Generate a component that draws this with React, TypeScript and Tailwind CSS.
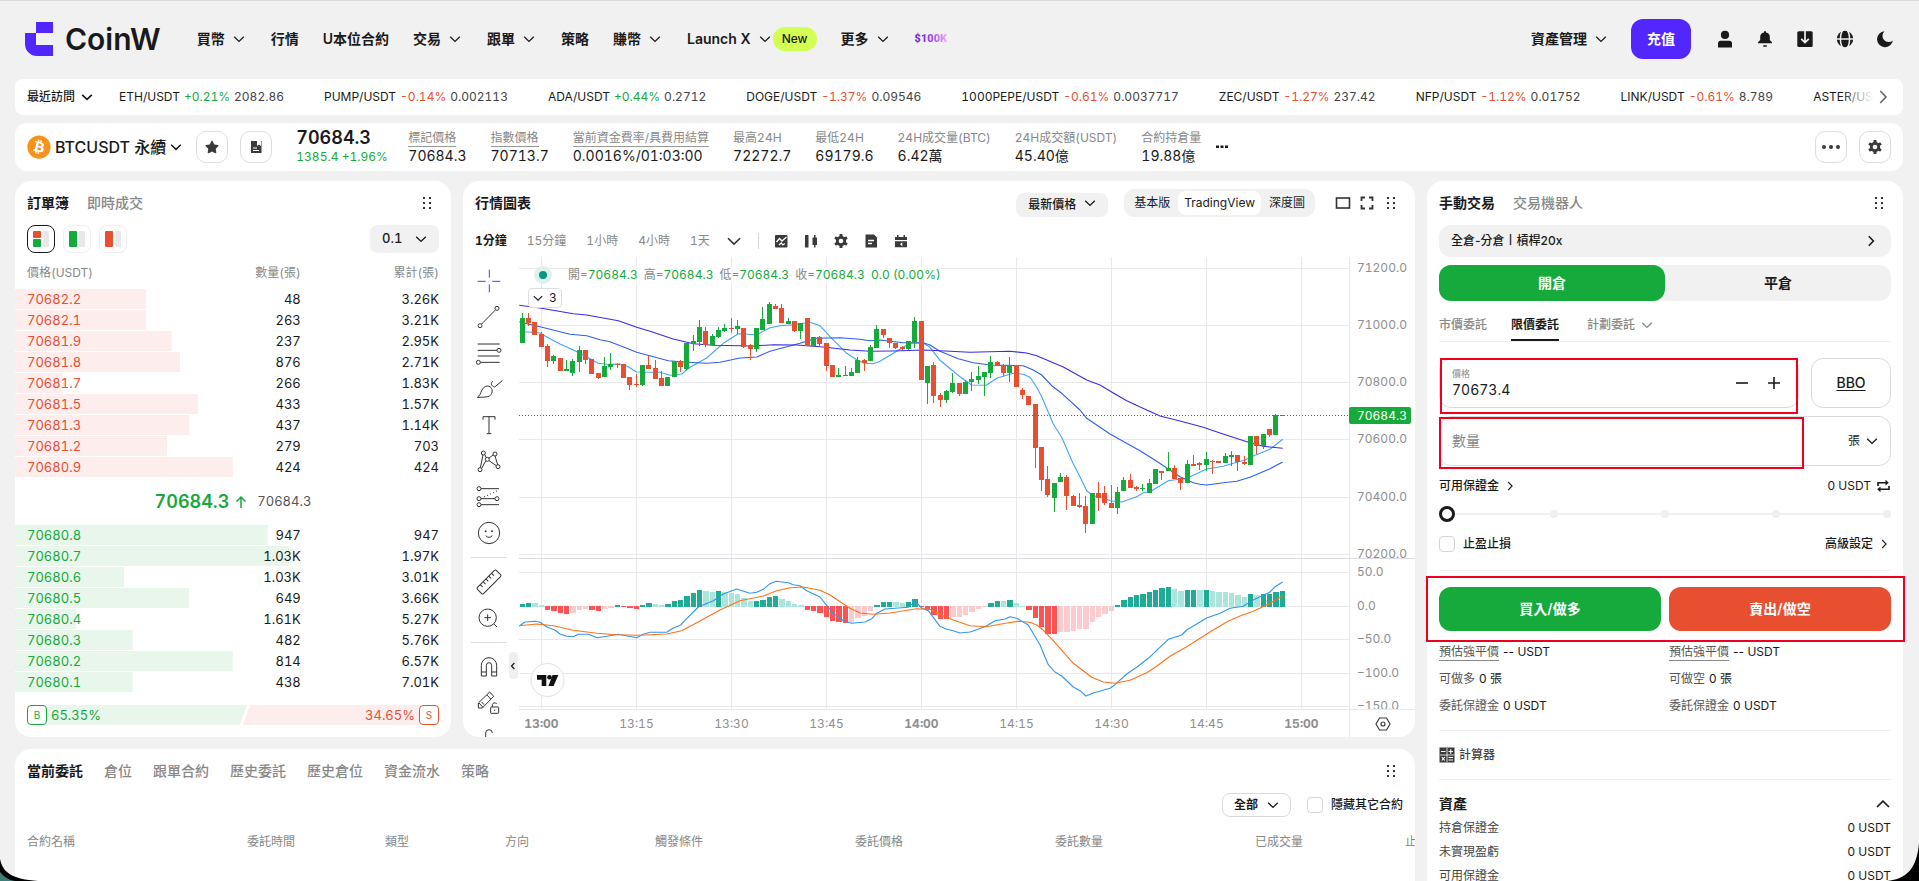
import type { ReactNode } from "react";
import { FaBitcoin, FaStar } from "react-icons/fa";

/* ---------- shared bits ---------- */

const Chevron = ({ className = "size-4", dir = "down", w = 1.3 }: { className?: string; dir?: "down" | "up" | "right" | "left"; w?: number }) => {
  const d = { down: "M3.2 5.8 8 10.4l4.8-4.6", up: "M3.2 10.4 8 5.8l4.8 4.6", right: "M5.8 3.2 10.4 8l-4.6 4.8", left: "M10.2 3.2 5.6 8l4.6 4.8" }[dir];
  return (
    <svg viewBox="0 0 16 16" className={`shrink-0 ${className}`} fill="none" stroke="currentColor" strokeWidth={w} aria-hidden="true">
      <path d={d} />
    </svg>
  );
};

const Grip = () => (
  <svg viewBox="0 0 12 16" className="h-4 w-3 shrink-0 fill-[#333]" aria-hidden="true">
    {[2, 8].map((x) => [2, 7, 12].map((y) => <rect key={`${x}-${y}`} x={x} y={y} width="2" height="2" />))}
  </svg>
);

const Gear = ({ className = "size-4" }: { className?: string }) => (
  <svg viewBox="-8 -8 16 16" className={className} aria-hidden="true">
    {[0, 60, 120].map((a) => (
      <rect key={a} x="-1.5" y="-7" width="3" height="14" rx="0.6" transform={`rotate(${a})`} fill="#3a3a3a" />
    ))}
    <path d="M0-5.8 5-2.9V2.9L0 5.8-5 2.9V-2.9Z" fill="#3a3a3a" />
    <circle r="2.3" fill="#fff" />
  </svg>
);

const Select = ({ label, value, className, box }: { label: string; value: string; className: string; box: string }) => (
  <div className={`relative shrink-0 ${box}`}>
    <select aria-label={label} defaultValue={value} className={`size-full appearance-none outline-none ${className}`}>
      <option>{value}</option>
    </select>
    <Chevron className="pointer-events-none absolute top-1/2 right-2.5 size-4 -translate-y-1/2" w={1.4} />
  </div>
);

const CheckBox = ({ label }: { label: string }) => (
  <label className="flex items-center gap-2 font-medium">
    <input type="checkbox" className="size-4 appearance-none rounded-sm border border-[#d5d5d5] bg-white" />
    {label}
  </label>
);

/* ---------- header ---------- */

const NavItem = ({ label, menu, badge }: { label: string; menu?: boolean; badge?: string }) => (
  <a href="#" className="flex items-center whitespace-nowrap">
    {label}
    {menu && <Chevron className="ml-1.5 size-4" />}
    {badge && <span className="rounded-full bg-[#d2ff52] px-[9px] text-xs leading-6 font-medium">{badge}</span>}
  </a>
);

const Header = () => (
  <header className="flex h-[79px] items-center border-t border-[#dcdcdc] pr-6 pb-0.5 pl-[25px] text-sm font-semibold">
    <a href="#" className="flex items-center gap-3">
      <svg viewBox="0 0 28 34" className="h-[34px] w-7" fill="#5227ff" aria-hidden="true">
        <path d="M11 0H28V11H11Z" />
        <path d="M0 11H11V23H28V34H12A12 12 0 0 1 0 22Z" />
      </svg>
      <span className="text-[30px] leading-8 font-semibold">CoinW</span>
    </a>
    <nav className="ml-9 flex items-center gap-6">
      <NavItem label="買幣" menu />
      <NavItem label="行情" />
      <NavItem label="U本位合約" />
      <NavItem label="交易" menu />
      <NavItem label="跟單" menu />
      <NavItem label="策略" />
      <NavItem label="賺幣" menu />
      <NavItem label="Launch X" menu badge="New" />
      <NavItem label="更多" menu />
      <a href="#" className="bg-gradient-to-r from-[#6a1fd0] via-[#a03ce0] to-[#f0a8ff] bg-clip-text font-['Roboto',sans-serif] text-[11px] font-black text-transparent">
        $100K
      </a>
    </nav>
    <div className="ml-auto flex items-center">
      <NavItem label="資產管理" menu />
      <button className="ml-[22px] h-10 rounded-xl bg-[#5227ff] px-4 text-white">充值</button>
      <div className="ml-6 flex items-center gap-5">
        <button aria-label="user">
          <svg viewBox="0 0 20 20" className="size-5" fill="#1a1a1a"><circle cx="10" cy="5.900" r="4.100" /><path d="M3 18.500V14.500A2.800 2.800 0 0 1 5.800 11.700h8.400A2.800 2.800 0 0 1 17 14.500v4Z" /></svg>
        </button>
        <button aria-label="notifications">
          <svg viewBox="0 0 20 20" className="size-5" fill="#1a1a1a"><path d="M9 2.200h2v1.300a4.600 4.600 0 0 1 3.800 4.600v2.900l2.200 2.300v1H3v-1l2.200-2.300V8.100A4.600 4.600 0 0 1 9 3.500ZM8.200 16.300h3.600v1.400H8.200Z" /></svg>
        </button>
        <button aria-label="download">
          <svg viewBox="0 0 20 20" className="size-5"><rect x="2.300" y="2.300" width="15.400" height="15.800" rx="1.500" fill="#1a1a1a" /><path d="M10 2v11.500M6.200 9.800 10 13.600l3.800-3.800" fill="none" stroke="#f1f1f1" strokeWidth="1.700" /></svg>
        </button>
        <button aria-label="language">
          <svg viewBox="0 0 20 20" className="size-5" fill="#1a1a1a">
            <circle cx="10" cy="10" r="8.200" />
            <g fill="none" stroke="#f1f1f1" strokeWidth="1.500"><ellipse cx="10" cy="10" rx="4.600" ry="10" /><path d="M1 10h18" /></g>
          </svg>
        </button>
        <button aria-label="dark mode">
          <svg viewBox="0 0 20 20" className="size-5" fill="#1a1a1a"><path d="M9.500 2.200a8 8 0 1 0 8.400 9.300 6 6 0 0 1-8.400-9.300Z" /></svg>
        </button>
      </div>
    </div>
  </header>
);

/* ---------- recent tickers ---------- */

const tickers = [
  ["ETH/USDT", "+0.21%", "2082.86"],
  ["PUMP/USDT", "-0.14%", "0.002113"],
  ["ADA/USDT", "+0.44%", "0.2712"],
  ["DOGE/USDT", "-1.37%", "0.09546"],
  ["1000PEPE/USDT", "-0.61%", "0.0037717"],
  ["ZEC/USDT", "-1.27%", "237.42"],
  ["NFP/USDT", "-1.12%", "0.01752"],
  ["LINK/USDT", "-0.61%", "8.789"],
  ["ASTER/USDT", "", ""],
];

const Tickers = () => (
  <section className="flex h-9 items-center rounded-lg bg-white px-3 text-xs">
    <button className="flex shrink-0 items-center gap-1 font-medium">
      最近訪問
      <Chevron className="size-4" w={1.6} />
    </button>
    <div className="relative ml-6 flex flex-1 gap-10 overflow-hidden">
      {tickers.map(([pair, change, price]) => (
        <a href="#" key={pair} className="flex shrink-0 gap-1 whitespace-nowrap">
          <span>{pair}</span>
          {change && <span className={change[0] === "+" ? "text-[#16a93b]" : "text-[#e84f31]"}>{change}</span>}
          {price && <span className="text-[#444]">{price}</span>}
        </a>
      ))}
      <div className="absolute inset-y-0 right-0 w-8 bg-gradient-to-r from-white/0 to-white" />
    </div>
    <button aria-label="next" className="-mr-0.5 text-[#666]"><Chevron dir="right" className="size-5" /></button>
  </section>
);

/* ---------- contract info ---------- */

const stats: [string, string, boolean][] = [
  ["標記價格", "70684.3", true],
  ["指數價格", "70713.7", true],
  ["當前資金費率/具費用結算", "0.0016%/01:03:00", true],
  ["最高24H", "72272.7", false],
  ["最低24H", "69179.6", false],
  ["24H成交量(BTC)", "6.42萬", false],
  ["24H成交額(USDT)", "45.40億", false],
  ["合約持倉量", "19.88億", false],
];

const SquareButton = ({ label, children }: { label: string; children: ReactNode }) => (
  <button aria-label={label} className="flex size-8 items-center justify-center rounded-[10px] border border-[#dedede] text-[#3a3a3a]">
    {children}
  </button>
);

const InfoBar = () => (
  <section className="flex h-12 items-center rounded-xl bg-white px-3">
    <FaBitcoin className="size-6 text-[#f7931a]" />
    <button className="ml-1 flex items-center gap-0.5 text-base font-medium whitespace-nowrap">
      BTCUSDT 永續
      <Chevron className="size-4" w={1.5} />
    </button>
    <div className="ml-3 flex gap-3">
      <SquareButton label="favorite"><FaStar className="size-3.5" /></SquareButton>
      <SquareButton label="contract details">
        <svg viewBox="0 0 16 16" className="size-4"><path d="M3 2h6v5l2-1.500L13 7V2h.500V14H3Z" fill="#3a3a3a" /><path d="M5 9h4M5 11.500h6" stroke="#fff" strokeWidth="1.200" /></svg>
      </SquareButton>
    </div>
    <div className="ml-6 w-[92px] whitespace-nowrap">
      <div className="text-lg leading-5 font-semibold">70684.3</div>
      <div className="text-xs leading-[18px] text-[#16a93b]">1385.4 +1.96%</div>
    </div>
    <dl className="ml-5 flex gap-6 whitespace-nowrap">
      {stats.map(([k, v, under]) => (
        <div key={k}>
          <dt className={`w-fit border-b text-xs leading-4 text-[#888] ${under ? "border-[#999]" : "border-transparent"}`}>{k}</dt>
          <dd className="text-sm leading-[18px]">{v}</dd>
        </div>
      ))}
    </dl>
    <button aria-label="more statistics" className="ml-3.5">
      <svg viewBox="0 0 14 4" className="h-1 w-3.5" fill="#1a1a1a"><rect x="1" y="0.500" width="3" height="2.500" /><rect x="5.500" y="0.500" width="3" height="2.500" /><rect x="10" y="0.500" width="3" height="2.500" /></svg>
    </button>
    <div className="ml-auto flex gap-3">
      <SquareButton label="more">
        <svg viewBox="0 0 20 4" className="h-1 w-5" fill="#3a3a3a"><circle cx="3" cy="2" r="2" /><circle cx="10" cy="2" r="2" /><circle cx="17" cy="2" r="2" /></svg>
      </SquareButton>
      <SquareButton label="settings"><Gear /></SquareButton>
    </div>
  </section>
);

/* ---------- order book ---------- */

const asks: [string, string, string, number][] = [
  ["70682.2", "48", "3.26K", 30],
  ["70682.1", "263", "3.21K", 30],
  ["70681.9", "237", "2.95K", 36],
  ["70681.8", "876", "2.71K", 38],
  ["70681.7", "266", "1.83K", 11],
  ["70681.5", "433", "1.57K", 42],
  ["70681.3", "437", "1.14K", 40],
  ["70681.2", "279", "703", 35],
  ["70680.9", "424", "424", 50],
];
const bids: [string, string, string, number][] = [
  ["70680.8", "947", "947", 58],
  ["70680.7", "1.03K", "1.97K", 63],
  ["70680.6", "1.03K", "3.01K", 25],
  ["70680.5", "649", "3.66K", 40],
  ["70680.4", "1.61K", "5.27K", 14],
  ["70680.3", "482", "5.76K", 27],
  ["70680.2", "814", "6.57K", 50],
  ["70680.1", "438", "7.01K", 27],
];

const BookRows = ({ rows, color, bar }: { rows: typeof asks; color: string; bar: string }) => (
  <tbody>
    {rows.map(([p, q, t, w]) => (
      <tr
        key={p}
        className="h-[21px]"
        style={{ backgroundImage: `linear-gradient(${bar},${bar})`, backgroundSize: `${w}% 20px`, backgroundRepeat: "no-repeat" }}
      >
        <td className={`pl-3 ${color}`}>{p}</td>
        <td className="pr-0.5 text-right">{q}</td>
        <td className="pr-3 text-right">{t}</td>
      </tr>
    ))}
  </tbody>
);

const BookCols = () => (
  <colgroup>
    <col className="w-[34%]" />
    <col className="w-[32%]" />
    <col className="w-[34%]" />
  </colgroup>
);

const OrderBook = () => (
  <section className="w-[436px] shrink-0 overflow-hidden rounded-2xl bg-white">
    <div className="flex h-11 items-center gap-[18px] pr-3.5 pl-3 text-sm">
      <button className="font-bold">訂單簿</button>
      <button className="font-medium text-[#888]">即時成交</button>
      <button aria-label="move" className="ml-auto px-1"><Grip /></button>
    </div>
    <div className="flex items-center gap-2 px-3">
      <button aria-label="both sides" className="flex size-7 items-center justify-center rounded-lg border border-[#1a1a1a]">
        <svg viewBox="0 0 16 16" className="size-4"><rect width="8" height="7" rx="1" fill="#e84f31" /><rect y="8" width="8" height="8" rx="1" fill="#16a93b" /><rect x="10" width="6" height="16" rx="1" fill="#e8e8e8" /></svg>
      </button>
      <button aria-label="bids" className="flex size-7 items-center justify-center rounded-lg border border-[#efefef]">
        <svg viewBox="0 0 16 16" className="size-4"><rect width="8" height="16" rx="1" fill="#16a93b" /><rect x="10" width="6" height="16" rx="1" fill="#e8e8e8" /></svg>
      </button>
      <button aria-label="asks" className="flex size-7 items-center justify-center rounded-lg border border-[#efefef]">
        <svg viewBox="0 0 16 16" className="size-4"><rect width="8" height="16" rx="1" fill="#e84f31" /><rect x="10" width="6" height="16" rx="1" fill="#e8e8e8" /></svg>
      </button>
      <Select label="depth" value="0.1" box="ml-auto h-7 w-[69px]" className="rounded-lg bg-[#f1f1f1] pl-3 text-[13px] font-medium" />
    </div>
    <table className="mt-1 w-full table-fixed border-collapse text-[13px]">
      <BookCols />
      <thead>
        <tr className="h-8 text-xs text-[#888]">
          <th className="pl-3 text-left font-normal">價格(USDT)</th>
          <th className="pr-0.5 text-right font-normal">數量(張)</th>
          <th className="pr-3 text-right font-normal">累計(張)</th>
        </tr>
      </thead>
      <BookRows rows={asks} color="text-[#e84f31]" bar="#fdeeed" />
    </table>
    <div className="flex h-[47px] items-center justify-center text-[13px] text-[#555]">
      <span className="text-lg font-semibold text-[#16a93b]">70684.3</span>
      <svg viewBox="0 0 16 16" className="mx-1 size-4" fill="none" stroke="#16a93b" strokeWidth="1.500"><path d="M8 14V3M3.500 7.500 8 3l4.500 4.500" /></svg>
      <span className="ml-1">70684.3</span>
    </div>
    <table className="w-full table-fixed border-collapse text-[13px]">
      <BookCols />
      <BookRows rows={bids} color="text-[#16a93b]" bar="#e8f6eb" />
    </table>
    <div className="m-3 flex h-5 items-center text-[13px]">
      <span className="flex size-5 items-center justify-center rounded border border-[#16a93b] text-[10px] text-[#16a93b]">B</span>
      <span className="h-5 flex-[198] bg-[#e8f6eb] pl-1 leading-5 text-[#16a93b] [clip-path:polygon(0_0,100%_0,calc(100%-7px)_100%,0_100%)]">65.35%</span>
      <span className="-ml-1 h-5 flex-[174] bg-[#fdeeed] pr-1 text-right leading-5 text-[#e84f31] [clip-path:polygon(7px_0,100%_0,100%_100%,0_100%)]">34.65%</span>
      <span className="flex size-5 items-center justify-center rounded border border-[#e84f31] text-[10px] text-[#e84f31]">S</span>
    </div>
  </section>
);

/* ---------- chart data: side, high, body top, body bottom, low (third-pixels) ---------- */

const candles = `g399 414 489 489;r399 414 429 438;r426 426 465 465;r456 462 501 501;r492 498 543 561;g525 528 543 552;r534 534 573 573;g540 567 573 573;g537 543 579 588;g498 510 546 576;r510 510 540 552;r537 537 582 582;r579 579 594 597;g531 558 591 591;g519 552 561 570;r549 552 555 564;r552 552 594 594;r591 591 615 630;r582 612 615 621;g555 555 615 618;r528 555 567 567;r540 564 597 597;r573 594 618 618;g591 591 618 618;g543 543 591 591;r540 543 561 576;g489 489 567 570;g465 483 492 513;g420 441 486 498;r441 453 495 501;g462 468 495 495;g441 450 471 474;g432 444 453 456;r414 444 447 459;g420 438 447 462;r444 444 501 504;r492 495 507 540;g444 444 507 516;g381 417 450 450;g366 372 432 432;r372 378 387 387;r372 384 429 429;g414 423 432 432;r423 423 453 456;g429 429 453 477;r414 414 498 498;g471 471 498 498;r468 471 492 501;r489 489 558 573;r555 555 591 591;g564 585 591 591;g558 585 588 588;g564 576 588 588;g531 540 579 579;r537 540 549 573;g495 501 543 543;g435 447 504 504;r447 447 465 474;r474 474 489 504;r489 489 504 507;r498 501 507 510;g483 483 507 510;g411 423 486 504;r423 423 600 600;g558 558 609 672;r546 555 648 669;r639 645 660 681;g630 633 660 669;g579 609 636 639;r609 609 642 648;g600 606 642 642;g576 597 606 633;g558 588 600 612;g576 576 591 648;g528 546 579 594;r543 546 558 558;r552 555 579 588;g531 555 579 606;r555 555 621 621;r624 630 645 657;r648 648 675 675;r672 672 804 864;r801 801 900 933;r858 897 945 951;g909 909 954 996;g879 891 906 906;r885 891 948 990;r945 948 978 978;r939 975 981 984;r948 978 1032 1059;g939 939 1032 1032;r906 939 954 993;r918 939 969 975;r915 969 984 984;g921 936 984 1002;g891 900 933 933;r882 900 924 924;r918 921 927 933;g912 924 927 933;g897 909 939 939;g867 867 912 912;r873 873 879 900;g816 864 873 873;r855 864 897 897;r894 894 909 930;g840 852 909 909;r825 852 858 858;r846 849 855 870;g816 837 855 873;r840 843 846 882;r843 843 849 849;g819 828 849 849;g813 825 831 858;r825 825 846 873;r828 846 852 855;g768 768 855 855;r768 768 798 822;g762 762 798 807;r747 747 765 771;g702 705 765 765;g705 705 708 708`
  .split(";")
  .map((s) => ({ up: s[0] === "g", v: s.slice(1).split(" ").map((n) => 180 + Number(n) / 3) }));

const histogram =
  "T192 T189 t189 t195 R210 R213 R219 R222 r219 r210 r207 R210 R213 r207 r204 T195 R201 R204 R207 T195 T189 t192 t195 T192 T183 T180 T168 T159 T150 t153 t156 T153 t157 t159 t162 t174 t183 T183 T180 T171 T168 t177 t183 t192 t195 R210 R213 R219 R231 R243 R246 R249 r246 r234 r228 r213 T195 T186 T186 t186 t189 T186 T177 R201 R210 R225 R237 R237 r231 r231 r225 r216 r207 r201 T189 T183 t183 T180 t189 t198 R210 R234 R261 R282 R282 r276 r276 r273 r267 r267 r246 r231 r222 r213 T195 T180 T171 T165 T162 T156 T150 T144 T141 t147 t153 T150 T150 t150 T150 t153 t156 t156 t159 t165 t171 T162 t165 T162 T162 T156 T153".split(" ");
const histColor: Record<string, string> = { T: "#22ab94", t: "#ace5dc", R: "#ff5252", r: "#fccbcd" };

const toPoints = (s: string, y0: number) =>
  s
    .split(" ")
    .map((p) => {
      const [x, y] = p.split(",").map(Number);
      return `${(460 + x / 3).toFixed(1)},${(y0 + y / 3).toFixed(1)}`;
    })
    .join(" ");

const fast = toPoints("178,456 205,456 240,459 262,472 300,492 345,512 375,528 415,550 440,553 480,552 500,558 530,576 570,577 600,577 630,586 665,582 690,562 740,534 790,490 835,461 890,464 930,443 960,437 1000,434 1050,427 1080,437 1110,470 1160,520 1190,539 1213,550 1240,551 1260,544 1300,520 1350,490 1390,489 1410,502 1440,541 1500,590 1535,615 1578,616 1612,594 1660,580 1690,583 1710,592 1730,622 1745,650 1780,732 1805,772 1840,852 1860,890 1880,932 1900,948 1930,952 1950,962 1985,966 2030,950 2050,938 2070,935 2125,902 2180,895 2240,867 2290,859 2320,850 2355,840 2380,828 2430,808 2468,778", 180);
const mid = toPoints("178,426 240,440 330,463 380,467 420,479 450,485 500,505 530,517 580,530 625,542 680,547 740,550 780,547 840,534 890,531 930,514 1020,490 1070,475 1140,473 1200,478 1230,482 1260,480 1330,488 1390,488 1410,495 1440,514 1495,536 1540,548 1590,555 1690,557 1720,570 1745,585 1775,617 1805,640 1860,690 1880,715 1950,762 2040,812 2090,844 2160,890 2200,908 2220,913 2240,915 2290,908 2330,904 2370,892 2430,866 2468,846", 180);
const slow = toPoints("178,376 240,384 340,401 380,405 475,422 530,442 570,454 640,477 700,491 760,496 880,498 940,494 1010,495 1090,501 1170,510 1230,514 1300,513 1390,510 1440,512 1530,517 1650,514 1700,519 1730,527 1780,548 1810,561 1880,600 1920,615 1960,639 2000,662 2060,690 2100,708 2160,723 2230,742 2280,759 2370,788 2410,799 2468,805", 180);
const macd = toPoints("178,258 195,246 225,244 240,247 262,262 285,270 300,282 320,289 340,290 355,283 385,283 412,293 440,289 475,283 530,293 550,283 570,277 620,277 640,264 662,255 680,236 715,201 760,182 790,162 830,147 870,160 890,157 910,148 930,131 948,124 985,128 1000,134 1020,137 1040,152 1080,171 1100,196 1120,220 1150,242 1175,250 1215,246 1235,236 1250,220 1275,207 1345,202 1366,184 1385,204 1405,212 1440,259 1460,268 1480,272 1500,279 1530,276 1575,260 1605,242 1635,237 1650,230 1670,235 1705,255 1740,315 1765,374 1785,396 1805,408 1840,441 1860,452 1878,468 1900,459 1950,445 1965,434 2000,402 2030,382 2065,355 2125,298 2165,285 2180,270 2240,234 2280,220 2310,205 2350,199 2380,180 2430,156 2445,140 2468,126", 540);
const signal = toPoints("178,257 230,252 280,257 340,271 410,280 470,284 540,286 620,282 665,272 710,248 780,210 840,182 870,176 910,168 950,152 990,143 1030,141 1080,151 1110,165 1170,205 1200,219 1240,223 1290,219 1370,206 1410,208 1440,223 1480,240 1530,257 1580,260 1640,249 1675,244 1710,247 1730,255 1750,271 1780,302 1840,370 1895,412 1930,426 1965,430 2010,421 2060,398 2090,379 2130,349 2180,320 2250,276 2300,246 2340,228 2380,214 2420,195 2468,168", 540);

const barX = (i: number) => Math.round(522.5 + (i * 95) / 15) - 0.5;
const times = ["13:00", "13:15", "13:30", "13:45", "14:00", "14:15", "14:30", "14:45", "15:00"];
const priceAxis: [string, number][] = [["71200.0", 268.5], ["71000.0", 325.5], ["70800.0", 382.5], ["70600.0", 439.5], ["70400.0", 497.5], ["70200.0", 554.5]];
const macdAxis: [string, number][] = [["50.0", 572.5], ["0.0", 606.5], ["−50.0", 639.5], ["−100.0", 673.5], ["−150.0", 706.5]];

const ChartPlot = () => (
  <svg viewBox="519 257 896 480" preserveAspectRatio="xMinYMin meet" className="h-[480px] w-full" role="img" aria-label="BTCUSDT 1分鐘">
    <defs>
      <clipPath id="upper"><rect x="519" y="257" width="896" height="301" /></clipPath>
      <clipPath id="lower"><rect x="519" y="559" width="896" height="150" /></clipPath>
    </defs>
    <g stroke="#e9e9e9">
      {times.map((t, i) => <path key={t} d={`M${541.5 + i * 95} 257V709`} />)}
      {[...priceAxis, ...macdAxis].map(([t, y]) => <path key={t} d={`M519 ${y}H1349`} />)}
      <path d="M1349.500 257V737M519 709.500H1415" />
      <path d="M519 558.500H1415" stroke="#dcdde4" />
    </g>
    {histogram.map((h, i) => {
      const y = 540 + Number(h.slice(1)) / 3;
      const up = h[0].toLowerCase() === "t";
      return <rect key={i} x={barX(i) - 2.500} y={up ? y : 606} width={barX(i + 1) - barX(i) - 1} height={up ? 607 - y : y - 606} fill={histColor[h[0]]} shapeRendering="crispEdges" />;
    })}
    <g fill="none" strokeWidth="1.100" strokeLinejoin="round">
      <polyline points={macd} stroke="#2f97ec" />
      <polyline points={signal} stroke="#ff7214" />
      <polyline points={fast} stroke="#43a5f5" />
      <polyline points={mid} stroke="#2f5ff0" />
      <polyline points={slow} stroke="#3a2aee" />
    </g>
    {candles.map(({ up, v: [hi, top, bot, lo] }, i) => (
      <g key={i} fill={up ? "#16a93b" : "#e84f31"} shapeRendering="crispEdges">
        <rect x={barX(i) - 0.500} y={hi} width="1" height={lo - hi} />
        <rect x={barX(i) - 2.500} y={top} width="5" height={bot - top} />
      </g>
    ))}
    <path d="M519 415.500H1349" stroke="#16913b" strokeDasharray="1 2" />
    <g fill="#8e8e8e" fontSize="12" dominantBaseline="central">
      <g clipPath="url(#upper)">{priceAxis.map(([t, y]) => <text key={t} x="1357" y={y - 1}>{t}</text>)}</g>
      <g clipPath="url(#lower)">{macdAxis.map(([t, y]) => <text key={t} x="1357" y={y - 1}>{t}</text>)}</g>
      {times.map((t, i) => <text key={t} x={541.5 + i * 95} y="723.500" textAnchor="middle" fontWeight={i % 4 === 0 ? 700 : 400}>{t}</text>)}
    </g>
    <rect x="1349" y="407" width="62" height="17" rx="2" fill="#16a93b" />
    <text x="1357" y="415.500" fontSize="12" fill="#fff" dominantBaseline="central">70684.3</text>
    <g fill="none" stroke="#3a3a3a" strokeWidth="1.200"><path d="M1379.500 718h7l3.500 6-3.500 6h-7l-3.500-6Z" /><circle cx="1383" cy="724" r="2" /></g>
    <circle cx="547.500" cy="680" r="16.500" fill="#fff" stroke="#e0e0ea" />
    <g fill="#111"><path d="M537 675h9.300v11h-4.600v-6.300H537Z" /><circle cx="549.500" cy="677.300" r="2.300" /><path d="M552.600 675h5.800l-4.800 11h-5.200Z" /></g>
  </svg>
);

/* ---------- drawing tools ---------- */

const Tool = ({ label, children, color = "#333" }: { label: string; children: ReactNode; color?: string }) => (
  <button aria-label={label} className="block size-9 shrink-0">
    <svg viewBox="-54 -54 108 108" className="size-9" fill="none" stroke={color} strokeWidth="3">{children}</svg>
  </button>
);

const DrawingTools = () => (
  <div className="relative flex h-[480px] w-14 shrink-0 flex-col items-center overflow-hidden pt-1.5 pr-1">
    <Tool label="crosshair" color="#5b3cf5"><path d="M1-34V-10M1 10V34M-34 1H-10M10 1H34" /></Tool>
    <Tool label="trend line"><circle cx="-27" cy="26" r="6" /><circle cx="24" cy="-26" r="6" /><path d="M-22 21 19-21" /></Tool>
    <Tool label="fibonacci"><path d="M-34-27H32M-34-8H24M-34 9H32M-26 28H32" /><circle cx="30" cy="-8" r="6" /><circle cx="-32" cy="28" r="6" /></Tool>
    <Tool label="brush"><path d="M-35 25C-22 18-24-8-5-9 8-9 12 4 8 13 4 23-4 25-35 25ZM12-24C4-18 6-9 17-6L40-25" /></Tool>
    <Tool label="text"><path d="M-18-16V-25H18V-16M0-25V26M-7 26H7" /></Tool>
    <Tool label="patterns"><path d="M-18-18-26 20M-12-19-9-10M-22 22-10 0M-1-8 12-18M0-1 22 14M18-15 26 11" /><circle cx="-17" cy="-24" r="6" /><circle cx="18" cy="-21" r="6" /><circle cx="27" cy="17" r="6" /><circle cx="-27" cy="26" r="6" /><circle cx="-5" cy="-5" r="6" /></Tool>
    <Tool label="forecast"><path d="M-24-25H30M-24 5H18M-24 23H30" /><path d="M-15 0 30-21" strokeDasharray="3 7" /><circle cx="-30" cy="-25" r="6" /><circle cx="-30" cy="5" r="6" /><circle cx="24" cy="5" r="6" /><circle cx="-30" cy="23" r="6" /></Tool>
    <Tool label="icons"><circle r="32" /><path d="M-10-5v.1M9-5v.1" strokeWidth="6" strokeLinecap="round" /><path d="M-10 8Q0 18 10 8" /></Tool>
    <div className="my-1.5 h-px w-9 shrink-0 bg-[#dcdde4]" />
    <Tool label="measure"><g transform="rotate(-45)"><rect x="-40" y="-13" width="80" height="26" rx="4" /><path d="M-24-13v10M-12-13v10M0-13v10M12-13v10M24-13v10" /></g></Tool>
    <Tool label="zoom in"><circle cx="-4" cy="-1" r="26" /><path d="M-4-11V9M-14-1H6M15 18 24 27" /></Tool>
    <div className="my-1.5 h-px w-9 shrink-0 bg-[#dcdde4]" />
    <Tool label="magnet"><path d="M-23 27V-5A23 23 0 0 1 23-5V27H8V-5A8 8 0 0 0-8-5V27ZM-23 15H-8M8 15H23" /></Tool>
    <Tool label="lock drawing"><path d="M-32 15V0L2-33 14-20-20 15ZM-22-3-15 5M-6-24 5-12M-30 0-18 13" /><rect x="5" y="12" width="24" height="19" rx="2" /><path d="M10 12V5a7 7 0 0 1 13-2M17 20v4" /></Tool>
    <Tool label="lock all"><path d="M-10 0V-18A10 10 0 0 1 10-18M-20 0H20V30H-20Z" /></Tool>
    <button aria-label="collapse tools" className="absolute top-[395px] right-px flex h-[27px] w-[9px] items-center rounded bg-[#efefef]"><Chevron dir="left" className="-ml-px size-2.5" w={2} /></button>
  </div>
);

const ChartPanel = () => (
  <section className="min-w-0 flex-1 overflow-hidden rounded-2xl bg-white">
    <div className="flex h-11 items-center pr-[18px] pl-3">
      <h2 className="text-sm font-bold">行情圖表</h2>
      <Select label="price type" value="最新價格" box="ml-auto h-6 w-[92px]" className="rounded-lg bg-[#f1f1f1] pl-3 text-xs font-medium" />
      <div className="ml-4 flex h-7 items-center rounded-[10px] bg-[#f1f1f1] px-0.5 text-xs">
        <button className="px-2">基本版</button>
        <button className="h-6 rounded-lg bg-white px-1.5">TradingView</button>
        <button className="px-2">深度圖</button>
      </div>
      <div className="ml-5 flex items-center gap-2">
        <button aria-label="layout"><svg viewBox="0 0 16 16" className="size-4" fill="none" stroke="#333" strokeWidth="1.600"><rect x="1.500" y="3" width="13" height="10" /></svg></button>
        <button aria-label="fullscreen"><svg viewBox="0 0 16 16" className="size-4" fill="none" stroke="#333" strokeWidth="1.800"><path d="M2.500 6V2.500H6M10 2.500h3.500V6M13.500 10v3.500H10M6 13.500H2.500V10" /></svg></button>
        <button aria-label="move" className="ml-0.5"><Grip /></button>
      </div>
    </div>
    <div className="flex h-8 items-center pl-3 text-xs text-[#888]">
      <div className="flex items-center gap-5">
        <button className="font-bold text-[#1a1a1a]">1分鐘</button>
        <button>15分鐘</button>
        <button>1小時</button>
        <button>4小時</button>
        <button>1天</button>
      </div>
      <button aria-label="more intervals" className="ml-3.5 text-[#333]"><Chevron className="size-5" /></button>
      <span className="mx-3.5 h-4 w-px bg-[#d5d5d5]" />
      <div className="flex gap-3.5">
        <button aria-label="indicators"><svg viewBox="0 0 16 16" className="size-4"><rect x="2" y="2" width="12.500" height="12.500" rx="1" fill="#3a3a3a" /><path d="m3.500 9 3-3.500 2.500 2.500L13.500 4" fill="none" stroke="#fff" strokeWidth="1.300" /><path d="m6 12 2.300-2 1.500 2 2-1.500" fill="none" stroke="#fff" strokeWidth="1.200" /></svg></button>
        <button aria-label="chart style"><svg viewBox="0 0 16 16" className="size-4" fill="#3a3a3a"><rect x="2" y="2" width="3.500" height="12.500" rx="0.500" /><rect x="9.500" y="4.500" width="4.500" height="7.500" rx="0.500" /><rect x="11" y="2" width="1.500" height="12.500" /></svg></button>
        <button aria-label="chart settings"><Gear /></button>
        <button aria-label="notes"><svg viewBox="0 0 16 16" className="size-4"><path d="M2.500 1.500h8.500l3 3v10H2.500Z" fill="#3a3a3a" /><path d="M5 7.500h6M5 10.500h4" stroke="#fff" strokeWidth="1.300" /></svg></button>
        <button aria-label="calendar"><svg viewBox="0 0 16 16" className="size-4" fill="#3a3a3a"><path d="M4 2h1.500v2h5V2H12v2h2v3H2V4h2ZM2 8.200h12v6H2Z" /><path d="m9.300 9.200-2.300 2 2.300 2Z" fill="#fff" /></svg></button>
      </div>
    </div>
    <div className="flex">
      <DrawingTools />
      <div className="relative min-w-0 flex-1">
        <ChartPlot />
        <div className="absolute top-[9px] left-[15px] flex items-center text-xs whitespace-nowrap">
          <span className="flex size-[18px] items-center justify-center rounded-full bg-[#dff1ed]"><span className="size-2 rounded-full bg-[#089981]" /></span>
          <div className="ml-4 flex gap-1.5 bg-white/70 text-[#16a93b]">
            {["開", "高", "低", "收"].map((k) => (
              <span key={k}><span className="text-[#888]">{k}=</span>70684.3</span>
            ))}
            <span>0.0 (0.00%)</span>
          </div>
        </div>
        <button className="absolute top-[31px] left-[9px] flex h-5 items-center rounded-sm border border-[#dcdde4] bg-white pr-1 pl-0.5 text-xs"><Chevron className="mr-1 size-3.5" />3</button>
      </div>
    </div>
  </section>
);

/* ---------- open orders ---------- */

const orderCols: [string, string][] = [
  ["合約名稱", "w-[220px]"],
  ["委託時間", "w-[138px]"],
  ["類型", "w-[120px]"],
  ["方向", "w-[150px]"],
  ["觸發條件", "w-[200px]"],
  ["委託價格", "w-[200px]"],
  ["委託數量", "w-[200px]"],
  ["已成交量", "w-[150px]"],
  ["止", "w-[200px]"],
];

const Orders = () => (
  <section className="flex-1 overflow-hidden rounded-t-2xl bg-white">
    <div className="flex h-11 items-center gap-[21px] pr-[18px] pl-3 text-sm font-medium text-[#888]">
      <button className="font-bold text-[#1a1a1a]">當前委託</button>
      {["倉位", "跟單合約", "歷史委託", "歷史倉位", "資金流水", "策略"].map((t) => <button key={t}>{t}</button>)}
      <button aria-label="move" className="ml-auto"><Grip /></button>
    </div>
    <div className="flex h-6 items-center justify-end gap-4 pr-3 text-xs">
      <Select label="filter" value="全部" box="h-6 w-[69px]" className="rounded-lg border border-[#dadada] pl-[11px] text-xs font-semibold" />
      <CheckBox label="隱藏其它合約" />
    </div>
    <table className="ml-3 w-[1578px] table-fixed text-xs text-[#888]">
      <thead>
        <tr className="h-[50px] text-left">
          {orderCols.map(([t, w]) => <th key={t} className={`font-normal ${w}`}>{t}</th>)}
        </tr>
      </thead>
    </table>
  </section>
);

/* ---------- trading form ---------- */

const Highlight = ({ className }: { className: string }) => <div className={`pointer-events-none absolute border-2 border-[#f0001f] ${className}`} />;

const Estimate = ({ side }: { side: string }) => (
  <div className="flex flex-col gap-[9px] leading-[18px]">
    <div><span className="mr-1 border-b border-[#888] pb-px text-[#555]">預估強平價</span>-- USDT</div>
    <div><span className="mr-1 text-[#555]">{side}</span>0 張</div>
    <div><span className="mr-1 text-[#555]">委託保證金</span>0 USDT</div>
  </div>
);

const TradePanel = () => (
  <section className="w-[476px] shrink-0 rounded-t-2xl bg-white px-3 text-xs normal-nums">
    <div className="flex h-11 items-center gap-[18px] pr-0.5 text-sm">
      <button className="font-bold">手動交易</button>
      <button className="font-medium text-[#888]">交易機器人</button>
      <button aria-label="move" className="ml-auto px-1"><Grip /></button>
    </div>
    <button className="flex h-8 w-full items-center justify-between rounded-xl bg-[#f1f1f1] px-3 font-medium">
      <span>全倉-分倉丨槓桿20x</span>
      <Chevron dir="right" className="size-4" w={1.6} />
    </button>
    <div className="mt-2 flex h-9 rounded-xl bg-[#f1f1f1] text-sm font-semibold">
      <button className="flex-1 rounded-xl bg-[#16a93b] text-white">開倉</button>
      <button className="flex-1">平倉</button>
    </div>
    <div className="flex h-[41px] items-stretch border-b border-[#efefef] pt-2 font-medium text-[#888]">
      <button>市價委託</button>
      <button className="ml-6 border-y-2 border-t-transparent border-b-[#1a1a1a] font-bold text-[#1a1a1a]">限價委託</button>
      <button className="ml-7 flex items-center gap-1">計劃委託<Chevron className="size-4" /></button>
    </div>
    <div className="mt-4 flex gap-3">
      <div className="relative flex h-[50px] flex-1 items-center rounded-xl border border-[#dadada] pr-4 pl-3">
        <div className="flex flex-1 flex-col pt-0.5">
          <label htmlFor="price" className="text-[9px] leading-3 text-[#888]">價格</label>
          <input id="price" defaultValue="70673.4" className="w-full text-sm leading-5 tabular-nums outline-none" />
        </div>
        <button aria-label="decrease" className="mr-4"><svg viewBox="0 0 16 16" className="size-4" stroke="#1a1a1a" strokeWidth="1.600"><path d="M2 8h12" /></svg></button>
        <button aria-label="increase"><svg viewBox="0 0 16 16" className="size-4" stroke="#1a1a1a" strokeWidth="1.600"><path d="M2 8h12M8 2v12" /></svg></button>
        <Highlight className="top-[-1px] right-0 bottom-[-7px] left-0" />
      </div>
      <button className="h-[50px] w-20 rounded-xl border border-[#dadada] text-sm font-medium underline underline-offset-2">BBO</button>
    </div>
    <div className="relative mt-2 flex h-[50px] items-center rounded-xl border border-[#dadada] pl-3">
      <input aria-label="數量" placeholder="數量" className="min-w-0 flex-1 text-sm outline-none placeholder:text-[#888]" />
      <Select label="unit" value="張" box="h-7 w-[52px]" className="pl-2.5 text-xs" />
      <Highlight className="top-0 bottom-[-4px] left-[-1px] w-[365px]" />
    </div>
    <div className="mt-2 flex h-6 items-center justify-between">
      <button className="flex items-center gap-1 font-medium">可用保證金<Chevron dir="right" className="size-3.5" /></button>
      <button className="flex items-center gap-1">
        0 USDT
        <svg viewBox="0 0 16 16" className="size-4" fill="none" stroke="#1a1a1a" strokeWidth="1.600"><path d="M3 8V4.700H11M14 8v3.300H5" /><path d="M10.500 1.800v5.800l3.300-2.900ZM5.500 8.400v5.800l-3.300-2.900Z" fill="#1a1a1a" stroke="none" /></svg>
      </button>
    </div>
    <div className="relative mt-2 flex h-4 items-center justify-between">
      <div className="absolute inset-x-1 top-[7px] h-0.5 bg-[#f1f1f1]" />
      {[0, 25, 50, 75, 100].map((n) => <span key={n} className="size-2 rounded-full bg-[#efefef]" />)}
      <input type="range" aria-label="比例" defaultValue={0} className="absolute inset-0 m-0 h-4 w-full appearance-none bg-transparent [&::-webkit-slider-thumb]:size-4 [&::-webkit-slider-thumb]:appearance-none [&::-webkit-slider-thumb]:rounded-full [&::-webkit-slider-thumb]:border-3 [&::-webkit-slider-thumb]:border-solid [&::-webkit-slider-thumb]:border-[#1a1a1a] [&::-webkit-slider-thumb]:bg-white" />
    </div>
    <div className="mt-3.5 flex h-4 items-center justify-between">
      <CheckBox label="止盈止損" />
      <button className="flex items-center gap-1 font-medium">高級設定<Chevron dir="right" className="size-3.5" /></button>
    </div>
    <div className="mt-[18px] h-px bg-[#efefef]" />
    <div className="relative mt-4 flex h-11 gap-2 text-sm font-semibold text-white">
      <button className="flex-1 rounded-xl bg-[#16a93b]">買入/做多</button>
      <button className="flex-1 rounded-xl bg-[#e84f31]">賣出/做空</button>
      <Highlight className="-top-[11px] -right-[14px] -bottom-[11px] -left-[13px]" />
    </div>
    <div className="mt-3 grid grid-cols-2 gap-2">
      <Estimate side="可做多" />
      <Estimate side="可做空" />
    </div>
    <button className="mt-[15px] flex h-[50px] w-full items-center gap-1 border-y border-[#efefef] font-medium text-[#444]">
      <svg viewBox="0 0 16 16" className="size-4" aria-hidden="true"><rect x="0.500" y="0.500" width="15" height="15" fill="#3a3a3a" /><path d="M1 8H15M8 1V15" stroke="#fff" strokeWidth="0.800" /><path d="M2 4.500h4.500M9.500 4.500h4.500M11.700 2.300v4.500M2.800 10l3 3.500M5.800 10l-3 3.500M9.500 10.500h4.500M9.500 13h4.500" stroke="#fff" strokeWidth="1.100" /></svg>
      計算器
    </button>
    <div className="mt-3 flex h-6 items-center justify-between text-sm font-semibold">
      資產
      <button aria-label="collapse"><Chevron dir="up" className="-mr-0.5 size-5" /></button>
    </div>
    <dl>
      {["持倉保證金", "未實現盈虧", "可用保證金"].map((k) => (
        <div key={k} className="flex h-6 items-center justify-between"><dt className="text-[#444]">{k}</dt><dd>0 USDT</dd></div>
      ))}
    </dl>
  </section>
);

export default function App() {
  return (
    <div className="relative flex h-screen flex-col overflow-hidden bg-[#f1f1f1] font-['Inter','Noto_Sans_CJK_TC',sans-serif] text-[#1a1a1a] tabular-nums">
      <Header />
      <main className="flex min-h-0 flex-1 flex-col pr-4 pl-[15px]">
        <Tickers />
        <div className="h-2 shrink-0" />
        <InfoBar />
        <div className="mt-2.5 flex min-h-0 flex-1 gap-3">
          <div className="flex min-w-0 flex-1 flex-col gap-3">
            <div className="flex shrink-0 gap-3">
              <OrderBook />
              <ChartPanel />
            </div>
            <Orders />
          </div>
          <TradePanel />
        </div>
      </main>
      <svg viewBox="0 0 38 22" className="pointer-events-none absolute bottom-0 left-0 h-[22px] w-[38px]" aria-hidden="true"><path d="M0 0C3 14 12 20 38 22H0Z" fill="#000" /><path d="M0 13C4 18 9 21 15 22H0Z" fill="#3f7f78" /></svg>
      <svg viewBox="0 0 38 38" className="pointer-events-none absolute right-0 bottom-0 size-[38px]" aria-hidden="true"><path d="M38 0C36 25 26 36 6 38H38Z" fill="#000" /></svg>
    </div>
  );
}
